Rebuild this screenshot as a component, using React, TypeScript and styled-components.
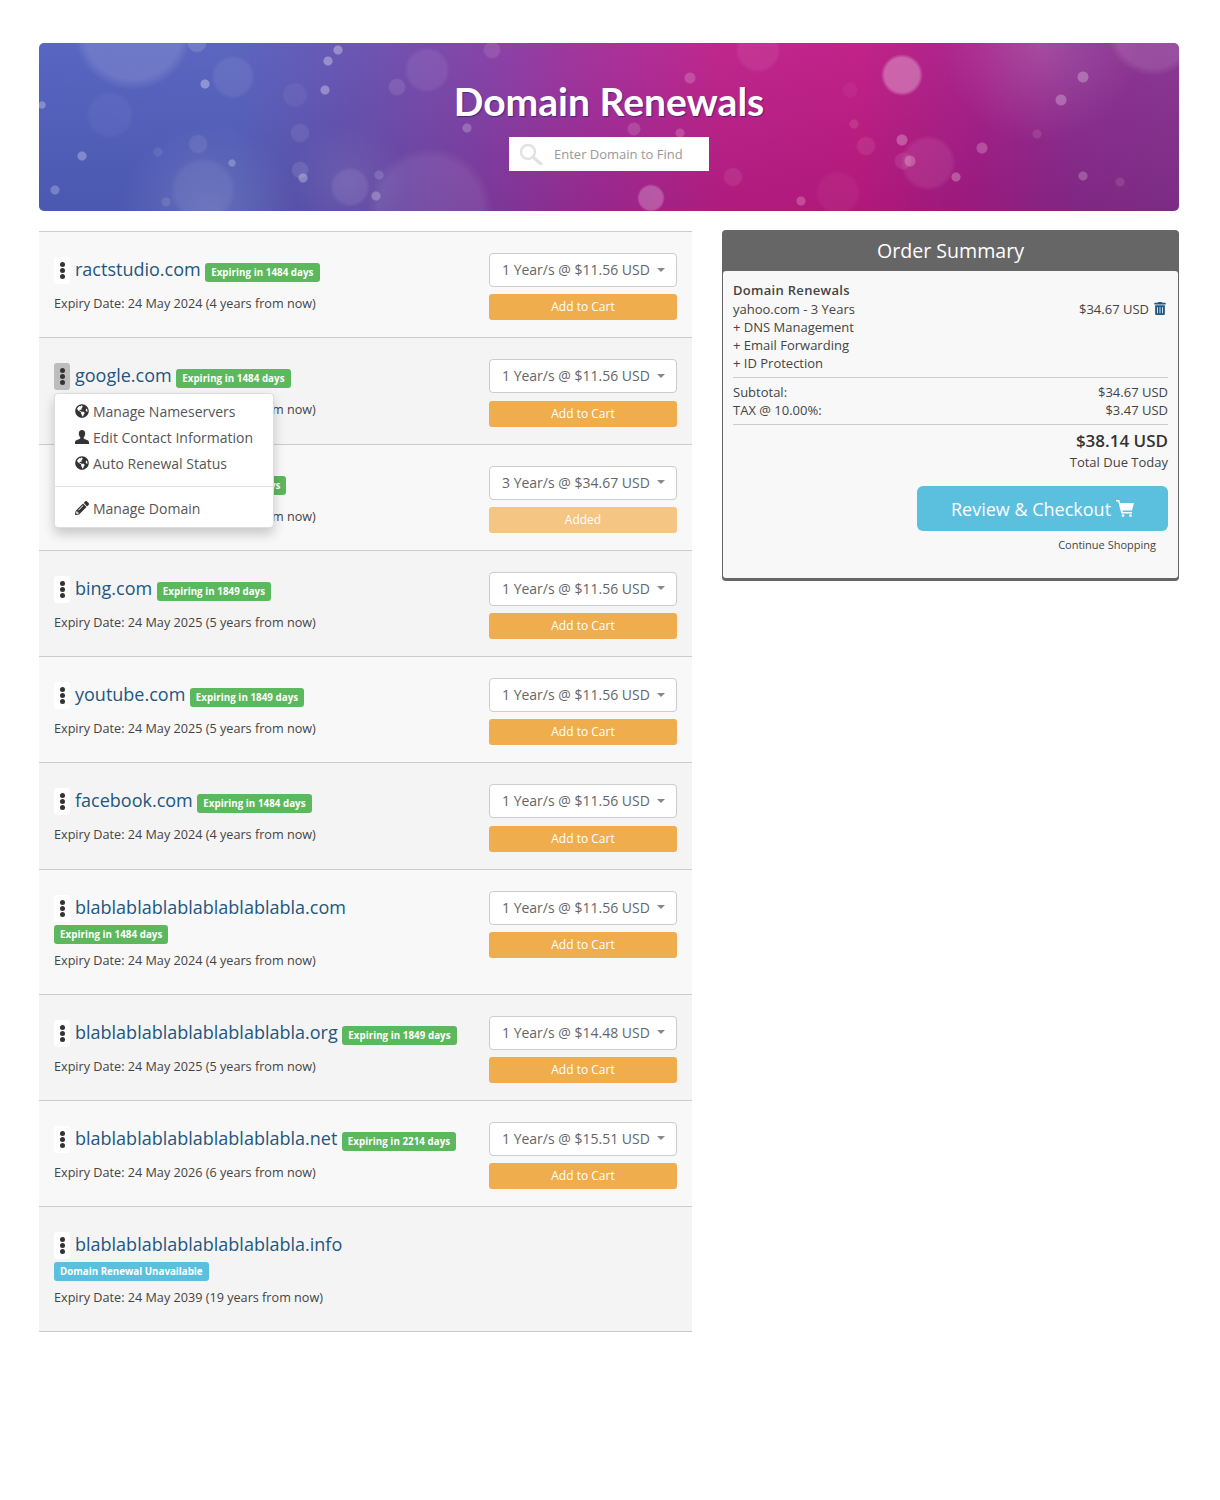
import React from "react";
import styled, { createGlobalStyle } from "styled-components";
import { FaGlobeAmericas, FaPencilAlt, FaTrashAlt } from "react-icons/fa";

const GlobalStyle = createGlobalStyle`
  html, body {
    margin: 0;
    background: #fff;
    font-family: "Open Sans", "Liberation Sans", sans-serif;
    color: #444;
  }
  * { box-sizing: border-box; }
`;

// x, y, radius, alpha - bokeh spots measured off the banner
const spots: [number, number, number, number][] = [
  [299, 7, 5, 0.32], [289, 18, 5, 0.32], [286, 47, 5, 0.32], [166, 41, 5, 0.32],
  [3, 62, 4, 0.28], [43, 113, 5, 0.28], [193, 120, 4, 0.24], [264, 135, 5, 0.28],
  [16, 147, 5, 0.24], [127, 159, 5, 0.1], [337, 153, 5, 0.24], [340, 132, 5, 0.14],
  [428, 85, 5, 0.22], [453, 7, 9, 0.1], [158, 0, 10, 0.14], [194, 34, 22, 0.07],
  [256, 52, 13, 0.05], [159, 101, 10, 0.08], [261, 90, 10, 0.08], [119, 109, 5, 0.08],
  [261, 127, 9, 0.1], [311, 144, 20, 0.08], [388, 27, 23, 0.07], [358, 44, 9, 0.1],
  [71, 72, 24, 0.04], [164, 147, 33, 0.06], [94, -13, 60, 0.13], [391, 167, 63, 0.08],
  [863, 32, 21, 0.3], [651, 35, 6, 0.18], [811, 47, 8, 0.04], [595, 86, 7, 0.14],
  [641, 90, 5, 0.18], [815, 81, 5, 0.1], [827, 103, 10, 0.08], [863, 97, 6, 0.26],
  [694, 134, 10, 0.08], [612, 155, 14, 0.24], [762, 158, 5, 0.22], [871, 118, 6, 0.22],
  [864, 118, 9, 0.09], [917, 134, 5, 0.26], [943, 105, 6, 0.22], [1044, 34, 6, 0.26],
  [1022, 57, 6, 0.26], [998, 91, 5, 0.1], [1044, 133, 5, 0.22], [1081, 139, 5, 0.1],
  [889, 120, 28, 0.08], [799, 150, 23, 0.04], [719, 7, 23, 0.07], [1114, -13, 46, 0.12],
];

const bokeh = spots
  .map(
    ([x, y, r, a]) =>
      `radial-gradient(circle ${r}px at ${x}px ${y}px, rgba(255,255,255,${a}) 82%, rgba(255,255,255,0) 100%)`,
  )
  .join(",");

const Page = styled.div`
  padding: 43px 41px 168px 39px;
  width: 1220px;
`;

const Banner = styled.div`
  height: 168px;
  border-radius: 5px;
  display: flex;
  flex-direction: column;
  align-items: center;
  padding-top: 34px;
  background:
    ${bokeh},
    radial-gradient(circle 100px at 1001px 0px, rgba(255,255,255,.14), rgba(255,255,255,0)),
    radial-gradient(circle 90px at 170px 170px, rgba(255,255,255,.13), rgba(255,255,255,0)),
    radial-gradient(circle 60px at 310px 140px, rgba(255,255,255,.08), rgba(255,255,255,0)),
    linear-gradient(180deg, rgba(255,255,255,.04), rgba(0,0,0,.08)),
    linear-gradient(90deg, #5160c0 0%, #5460bd 17%, #664fb0 28%, #7f3fa6 38%, #a32b98 49%, #bd1e88 60%, #bf1a83 72%, #a51c88 82%, #8a2a8e 91%, #86308f 100%);
`;

const BannerTitle = styled.h1`
  margin: 0;
  font-family: "Lato", "Open Sans", sans-serif;
  font-size: 39px;
  line-height: 49px;
  font-weight: 700;
  color: #fff;
  text-shadow: 1px 1px 1px rgba(40, 30, 120, 0.7);
`;

const SearchBox = styled.div`
  width: 200px;
  height: 34px;
  margin-top: 11px;
  background: #fff;
  display: flex;
  align-items: center;
  gap: 11px;
  padding-left: 10px;
  font-size: 13px;
  color: #999;
`;

const Columns = styled.div`
  display: grid;
  grid-template-columns: 653px 457px;
  column-gap: 30px;
  align-items: start;
  margin-top: 19px;
`;

const DomainList = styled.div`
  margin-top: 1px;
  border-top: 1px solid #ccc;
`;

const Row = styled.div<{ $raised?: boolean }>`
  position: relative;
  z-index: ${(p) => (p.$raised ? 2 : 1)};
  display: flex;
  justify-content: space-between;
  min-height: 106.25px;
  padding: 0 15px;
  border-bottom: 1px solid #ccc;
  &:nth-child(odd) { background: #f8f8f8; }
  &:nth-child(even) { background: #f4f4f4; }
`;

const RowInfo = styled.div`
  width: 407px;
  padding: 25px 0 24.65px;
`;

const NameLine = styled.div`
  display: flex;
  flex-wrap: wrap;
  align-items: center;
`;

const Kebab = styled.div<{ $open?: boolean }>`
  width: 16px;
  height: 27px;
  margin: 0 5px 2px 0;
  border-radius: 3px;
  background: ${(p) => (p.$open ? "#bdbdbd" : "#fff")};
  display: flex;
  flex-direction: column;
  align-items: center;
  justify-content: center;
  gap: 1px;
`;

const Dot = styled.span`
  width: 5px;
  height: 5px;
  border-radius: 50%;
  background: #333;
`;

const DomainName = styled.a`
  font-size: 18px;
  line-height: 25px;
  margin: 0 4.5px 4px 0;
  color: #23567f;
`;

const Badge = styled.span<{ $tone?: "success" | "info" }>`
  display: block;
  height: 19px;
  margin: 1px 0 -1px;
  padding: 0 6px;
  border-radius: 3px;
  background: ${(p) => (p.$tone === "info" ? "#5bc0de" : "#5cb85c")};
  color: #fff;
  font-size: 9.75px;
  line-height: 19px;
  font-weight: 700;
  letter-spacing: ${(p) => (p.$tone === "info" ? "0" : "0.05px")};
  white-space: nowrap;
`;

const Expiry = styled.div`
  margin-top: 8px;
  font-size: 12.65px;
  line-height: 18.5px;
  color: #444;
`;

const RowActions = styled.div`
  width: 188px;
  padding-top: 21px;
`;

const TermSelect = styled.div`
  height: 34px;
  background: #fff;
  border: 1px solid #ccc;
  border-radius: 4px;
  display: flex;
  align-items: center;
  justify-content: space-between;
  padding: 0 11px 1px 12px;
  font-size: 14px;
  color: #666;
`;

const Caret = styled.span`
  width: 0;
  height: 0;
  border-left: 4px solid transparent;
  border-right: 4px solid transparent;
  border-top: 4px solid #888;
`;

const CartButton = styled.button<{ $added?: boolean }>`
  display: block;
  width: 100%;
  height: 26px;
  margin-top: 7.3px;
  padding: 0 0 1px;
  border: 0;
  border-radius: 3px;
  background: ${(p) => (p.$added ? "#f4c583" : "#f0ad4e")};
  color: #fff;
  font-family: inherit;
  font-size: 12px;
`;

const Menu = styled.div`
  position: absolute;
  top: 55px;
  left: 15px;
  width: 220px;
  height: 135px;
  padding-top: 4px;
  background: #fff;
  border: 1px solid #ddd;
  border-radius: 4px;
  box-shadow: 0 6px 12px rgba(0, 0, 0, 0.2);
`;

const MenuItem = styled.div`
  height: 26px;
  padding-left: 20px;
  display: flex;
  align-items: center;
  gap: 4px;
  font-size: 14px;
  color: #555;
  svg { width: 14px; height: 14px; flex: none; color: #333; }
`;

const MenuDivider = styled.div`
  height: 1px;
  margin: 10px 0 8px;
  background: #e5e5e5;
`;

const Summary = styled.aside`
  border-radius: 4px;
  background: #666;
  padding: 0 1px 3px;
`;

const SummaryTitle = styled.h2`
  margin: 0;
  height: 41px;
  font-size: 19.6px;
  line-height: 42px;
  font-weight: 400;
  color: #fff;
  text-align: center;
`;

const SummaryBody = styled.div`
  height: 307px;
  background: #f8f8f8;
  border-radius: 3px;
  padding: 10px 10px 0 10px;
  font-size: 13px;
  line-height: 18px;
  color: #444;
`;

const SectionName = styled.div`
  font-weight: 600;
  letter-spacing: 0.3px;
  margin-bottom: 1px;
`;

const SummaryLine = styled.div`
  display: flex;
  justify-content: space-between;
  align-items: center;
`;

const TrashButton = styled.span`
  display: inline-flex;
  margin: 0 2px 0 5px;
  color: #1f5a87;
  vertical-align: -1px;
  svg { width: 12px; height: 13px; }
`;

const Rule = styled.div`
  height: 1px;
  margin: 5px 0 5px;
  background: #ccc;
`;

const TotalBlock = styled.div`
  text-align: right;
`;

const TotalAmount = styled.div`
  font-size: 17px;
  line-height: 22px;
  font-weight: 600;
  color: #333;
`;

const TotalNote = styled.div`
  line-height: 18px;
  margin-top: 1px;
`;

const CheckoutRow = styled.div`
  display: flex;
  justify-content: flex-end;
  margin-top: 15px;
`;

const CheckoutButton = styled.button`
  width: 251px;
  height: 45px;
  border: 0;
  border-radius: 6px;
  background: #5bc0de;
  color: #fff;
  font-family: inherit;
  font-size: 18px;
  display: flex;
  align-items: center;
  justify-content: center;
  gap: 5px;
`;

const ContinueLink = styled.div`
  margin-top: 5px;
  padding-right: 12px;
  text-align: right;
  font-size: 11px;
  line-height: 18px;
  color: #444;
`;

const SearchGlyph = () => (
  <svg width="24" height="22" viewBox="0 0 24 22" fill="none" aria-hidden="true">
    <circle cx="9" cy="9" r="7" stroke="#e2e2e2" strokeWidth="2.4" />
    <path d="M14 14l8 7" stroke="#e2e2e2" strokeWidth="3.2" strokeLinecap="round" />
  </svg>
);

const UserGlyph = () => (
  <svg viewBox="0 0 14 14" aria-hidden="true">
    <path
      fill="currentColor"
      d="M7 0c2 0 3.2 1.5 3.2 3.5 0 1.6-.7 3.2-1.6 4 0 .8.3 1.2 1 1.5l3 1.2c.9.4 1.4 1.2 1.4 2.3V14H0v-1.5c0-1.1.5-1.9 1.4-2.3l3-1.2c.7-.3 1-.7 1-1.5-.9-.8-1.6-2.4-1.6-4C3.8 1.5 5 0 7 0z"
    />
  </svg>
);

const CartGlyph = () => (
  <svg width="18" height="17" viewBox="0 0 18 17" aria-hidden="true">
    <path
      fill="#fff"
      d="M0 0h3.2l1 3H18l-2 7.5H6.4l.4 1.5H16v1.6H5.4L2.2 1.6H0z"
    />
    <circle cx="7" cy="15.6" r="1.3" fill="#fff" />
    <circle cx="14.5" cy="15.6" r="1.3" fill="#fff" />
  </svg>
);

type Domain = {
  name: string;
  badge: string;
  tone?: "success" | "info";
  expiry: string;
  term?: string;
  added?: boolean;
  menu?: boolean;
};

const longName = "bla".repeat(9);

const domains: Domain[] = [
  { name: "ractstudio.com", badge: "Expiring in 1484 days", expiry: "24 May 2024 (4 years from now)", term: "1 Year/s @ $11.56 USD" },
  { name: "google.com", badge: "Expiring in 1484 days", expiry: "24 May 2024 (4 years from now)", term: "1 Year/s @ $11.56 USD", menu: true },
  { name: "yahoo.com", badge: "Expiring in 1484 days", expiry: "24 May 2024 (4 years from now)", term: "3 Year/s @ $34.67 USD", added: true },
  { name: "bing.com", badge: "Expiring in 1849 days", expiry: "24 May 2025 (5 years from now)", term: "1 Year/s @ $11.56 USD" },
  { name: "youtube.com", badge: "Expiring in 1849 days", expiry: "24 May 2025 (5 years from now)", term: "1 Year/s @ $11.56 USD" },
  { name: "facebook.com", badge: "Expiring in 1484 days", expiry: "24 May 2024 (4 years from now)", term: "1 Year/s @ $11.56 USD" },
  { name: `${longName}.com`, badge: "Expiring in 1484 days", expiry: "24 May 2024 (4 years from now)", term: "1 Year/s @ $11.56 USD" },
  { name: `${longName}.org`, badge: "Expiring in 1849 days", expiry: "24 May 2025 (5 years from now)", term: "1 Year/s @ $14.48 USD" },
  { name: `${longName}.net`, badge: "Expiring in 2214 days", expiry: "24 May 2026 (6 years from now)", term: "1 Year/s @ $15.51 USD" },
  { name: `${longName}.info`, badge: "Domain Renewal Unavailable", tone: "info", expiry: "24 May 2039 (19 years from now)" },
];

const DomainMenu = () => (
  <Menu>
    <MenuItem><FaGlobeAmericas />Manage Nameservers</MenuItem>
    <MenuItem><UserGlyph />Edit Contact Information</MenuItem>
    <MenuItem><FaGlobeAmericas />Auto Renewal Status</MenuItem>
    <MenuDivider />
    <MenuItem><FaPencilAlt />Manage Domain</MenuItem>
  </Menu>
);

const DomainRow: React.FC<{ domain: Domain }> = ({ domain }) => (
  <Row $raised={domain.menu}>
    <RowInfo>
      <NameLine>
        <Kebab $open={domain.menu}>
          <Dot />
          <Dot />
          <Dot />
        </Kebab>
        <DomainName>{domain.name}</DomainName>
        <Badge $tone={domain.tone}>{domain.badge}</Badge>
      </NameLine>
      <Expiry>Expiry Date: {domain.expiry}</Expiry>
    </RowInfo>
    {domain.term && (
      <RowActions>
        <TermSelect>
          {domain.term}
          <Caret />
        </TermSelect>
        <CartButton $added={domain.added}>
          {domain.added ? "Added" : "Add to Cart"}
        </CartButton>
      </RowActions>
    )}
    {domain.menu && <DomainMenu />}
  </Row>
);

const App: React.FC = () => (
  <Page>
    <GlobalStyle />
    <Banner>
      <BannerTitle>Domain Renewals</BannerTitle>
      <SearchBox>
        <SearchGlyph />
        Enter Domain to Find
      </SearchBox>
    </Banner>
    <Columns>
      <DomainList>
        {domains.map((d) => (
          <DomainRow key={d.name} domain={d} />
        ))}
      </DomainList>
      <Summary>
        <SummaryTitle>Order Summary</SummaryTitle>
        <SummaryBody>
          <SectionName>Domain Renewals</SectionName>
          <SummaryLine>
            <span>yahoo.com - 3 Years</span>
            <span>
              $34.67 USD
              <TrashButton><FaTrashAlt /></TrashButton>
            </span>
          </SummaryLine>
          <div>+ DNS Management</div>
          <div>+ Email Forwarding</div>
          <div>+ ID Protection</div>
          <Rule />
          <SummaryLine>
            <span>Subtotal:</span>
            <span>$34.67 USD</span>
          </SummaryLine>
          <SummaryLine>
            <span>TAX @ 10.00%:</span>
            <span>$3.47 USD</span>
          </SummaryLine>
          <Rule />
          <TotalBlock>
            <TotalAmount>$38.14 USD</TotalAmount>
            <TotalNote>Total Due Today</TotalNote>
          </TotalBlock>
          <CheckoutRow>
            <CheckoutButton>
              Review &amp; Checkout
              <CartGlyph />
            </CheckoutButton>
          </CheckoutRow>
          <ContinueLink>Continue Shopping</ContinueLink>
        </SummaryBody>
      </Summary>
    </Columns>
  </Page>
);

export default App;
